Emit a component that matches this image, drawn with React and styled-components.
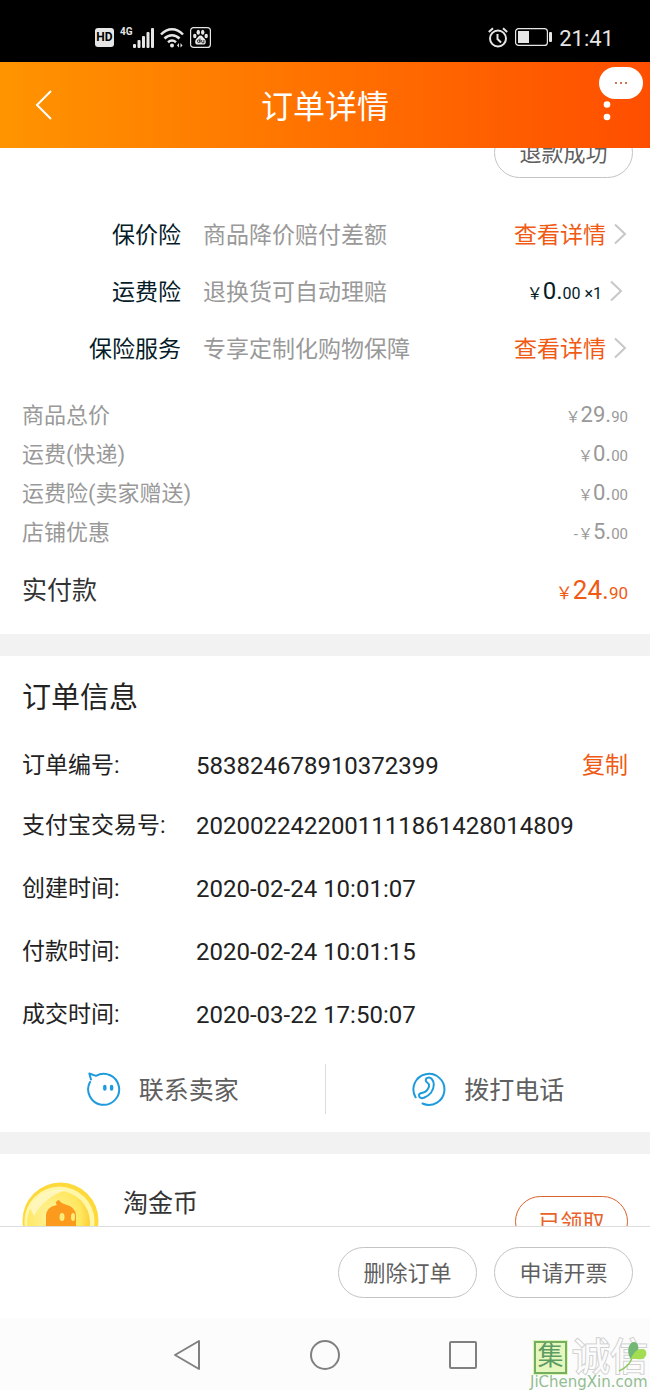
import styled, { createGlobalStyle } from "styled-components";

/* ---------- GLOBAL ---------- */

const GlobalStyle = createGlobalStyle`
  * {
    box-sizing: border-box;
  }

  body {
    margin: 0;
    background: #ffffff;
    font-family: Roboto, "Noto Sans CJK SC", sans-serif;
  }

  button {
    font-family: inherit;
    cursor: pointer;
  }

  svg {
    display: block;
    flex-shrink: 0;
  }
`;

const Page = styled.div`
  position: relative;
  height: 100vh;
  display: flex;
  flex-direction: column;
  overflow: hidden;
`;

/* ---------- STATUS BAR ---------- */

const StatusBar = styled.div`
  flex-shrink: 0;
  height: 62px;
  padding: 12px 36px 0 95px;
  display: flex;
  align-items: center;
  justify-content: space-between;
  background: #000000;
  color: #e6e6e6;
`;

const StatusGroup = styled.div`
  display: flex;
  align-items: center;
  gap: ${({ $gap }) => $gap}px;
`;

const HdBadge = styled.span`
  width: 19px;
  height: 19px;
  border-radius: 3px;
  background: #e6e6e6;
  color: #000000;
  font-size: 12px;
  line-height: 19px;
  font-weight: 700;
  text-align: center;
`;

const Signal = styled.div`
  display: flex;
  align-items: flex-start;
`;

const Network = styled.span`
  font-size: 10px;
  line-height: 10px;
  font-weight: 700;
`;

const Clock = styled.time`
  padding-top: 3px;
  font-size: 22px;
  line-height: 26px;
`;

/* ---------- HEADER ---------- */

const Header = styled.header`
  flex-shrink: 0;
  height: 86px;
  padding: 0 23px;
  display: grid;
  grid-template-columns: 40px 1fr 40px;
  align-items: center;
  background: linear-gradient(90deg, #ff9400, #ff4e00);
  color: #ffffff;
`;

const IconButton = styled.button`
  height: 44px;
  padding: 0;
  border: none;
  background: none;
  color: inherit;
  display: flex;
  align-items: center;
  justify-content: center;
`;

const Title = styled.h1`
  margin: 0;
  padding-top: 4px;
  font-size: 32px;
  line-height: 40px;
  font-weight: 400;
  text-align: center;
`;

const Bubble = styled.span`
  position: absolute;
  top: 67px;
  right: 7px;
  width: 44px;
  height: 32px;
  border-radius: 16px;
  background: #ffffff;
  display: flex;
  align-items: center;
  justify-content: center;
  gap: 3px;
`;

const BubbleDot = styled.i`
  width: 2px;
  height: 2px;
  background: #c8775a;
`;

/* ---------- CONTENT ---------- */

const Main = styled.main`
  flex: 1;
  min-height: 0;
  overflow: hidden;
`;

const Pill = styled.button`
  width: ${({ $accent }) => ($accent ? 113 : 139)}px;
  height: 51px;
  padding: 3px 0 0;
  border: 1px solid ${({ $accent }) => ($accent ? "#d9632c" : "#c4c4c4")};
  border-radius: 26px;
  background: #ffffff;
  color: ${({ $accent }) => ($accent ? "#e8622a" : "#5f5f5f")};
  font-size: 22px;
  line-height: 32px;
`;

/* scrolled part way under the header */
const RefundRow = styled.div`
  margin-top: -21px;
  padding: 0 17px 29px;
  display: flex;
  justify-content: flex-end;
`;

const InsuranceList = styled.ul`
  margin: 0;
  padding: 0;
  list-style: none;
`;

const InsuranceRow = styled.li`
  height: 57px;
  padding-right: ${({ $priced }) => ($priced ? 27 : 23)}px;
  display: grid;
  grid-template-columns: 181px 1fr auto;
  column-gap: 22px;
  align-items: center;
  font-size: 23px;
  line-height: 32px;
`;

const InsuranceName = styled.span`
  color: #051b28;
  text-align: right;
`;

const InsuranceText = styled.span`
  color: #999999;
`;

const DetailLink = styled.a`
  display: flex;
  align-items: center;
  gap: 7px;
  color: ${({ $priced }) => ($priced ? "#051b28" : "#f05a14")};
  text-decoration: none;

  svg {
    margin-bottom: 4px;
  }
`;

const Amount = styled.span`
  color: ${({ $color }) => $color || "inherit"};
  font-size: ${({ $size }) => $size || 22}px;
  line-height: 32px;
  white-space: nowrap;

  small {
    font-size: ${({ $small }) => $small || 15}px;
  }
`;

const Fees = styled.dl`
  margin: 0;
  padding: 18px 22px 4px;

  dt,
  dd {
    margin: 0;
  }
`;

const FeeRow = styled.div`
  height: ${({ $total }) => ($total ? 78 : 39)}px;
  display: flex;
  align-items: center;
  justify-content: space-between;
  color: ${({ $total }) => ($total ? "#333333" : "#999999")};
  font-size: ${({ $total }) => ($total ? 25 : 22)}px;
  line-height: 32px;
`;

const Band = styled.div`
  height: 22px;
  background: #f2f2f2;
`;

const Info = styled.section`
  padding: 22px 22px 0;
`;

const SectionTitle = styled.h2`
  margin: 0 0 20px;
  color: #222222;
  font-size: 29px;
  line-height: 40px;
  font-weight: 400;
`;

const InfoList = styled.dl`
  margin: 0;

  dt,
  dd {
    margin: 0;
  }
`;

const InfoRow = styled.div`
  height: ${({ $first }) => ($first ? 56 : 63)}px;
  display: grid;
  grid-template-columns: 174px 1fr auto;
  align-items: center;
  color: #222222;
  font-size: 24px;
  line-height: 32px;

  dt {
    font-size: 23px;
  }
`;

const CopyButton = styled.button`
  padding: 0;
  border: none;
  background: none;
  color: #f05a14;
  font-size: 23px;
  line-height: 32px;
`;

const Contacts = styled.div`
  height: 86px;
  display: grid;
  grid-template-columns: 1fr 1px 1fr;
  align-items: center;
`;

const ContactButton = styled.button`
  padding: 0;
  border: none;
  background: none;
  display: flex;
  align-items: center;
  justify-content: center;
  gap: 17px;
  color: #5f5f5f;
  font-size: 25px;
  line-height: 36px;
`;

const ContactLabel = styled.span`
  padding-top: 4px;
`;

const Divider = styled.span`
  height: 50px;
  background: #dddddd;
`;

const CoinRow = styled.section`
  padding: 28px 22px 0;
  display: flex;
  align-items: flex-start;
`;

const CoinName = styled.h3`
  flex: 1;
  margin: 4px 0 0 24px;
  color: #333333;
  font-size: 25px;
  line-height: 36px;
  font-weight: 400;
`;

const CoinAction = styled.div`
  padding-top: 14px;
`;

/* ---------- BOTTOM ---------- */

const ActionBar = styled.footer`
  flex-shrink: 0;
  height: 92px;
  padding: 0 17px;
  border-top: 1px solid #dddddd;
  display: flex;
  align-items: center;
  justify-content: flex-end;
  gap: 17px;
  background: #ffffff;
`;

const NavBar = styled.nav`
  flex-shrink: 0;
  height: 72px;
  padding: 2px 118px 0;
  display: grid;
  grid-template-columns: repeat(3, 1fr);
  align-items: center;
  background: #fcfcfc;
  color: #808080;
`;

const Watermark = styled.div`
  position: absolute;
  right: 0;
  bottom: 0;
  width: 120px;
`;

const MarkTop = styled.div`
  padding-left: 4px;
  display: flex;
  align-items: center;
  gap: 5px;
`;

const MarkSeal = styled.span`
  width: 33px;
  height: 33px;
  border: 2px solid #74ae62;
  outline: 1px solid #dff5b4;
  background: #e5f7bd;
  color: #5d9c63;
  font-size: 26px;
  line-height: 27px;
  text-align: center;
`;

const MarkName = styled.span`
  color: #fcfcfc;
  font-size: 38px;
  line-height: 34px;
  -webkit-text-stroke: 2px #d0d0d0;
  paint-order: stroke fill;
`;

const MarkSite = styled.div`
  color: #93bd93;
  font-family: "DejaVu Sans", sans-serif;
  font-size: 15px;
  line-height: 16px;
`;

const Leaf = styled.svg`
  position: absolute;
  right: 2px;
  top: 1px;
`;

/* ---------- DATA ---------- */

const insurances = [
  { name: "保价险", text: "商品降价赔付差额" },
  { name: "运费险", text: "退换货可自动理赔", price: ["0", "00"], count: 1 },
  { name: "保险服务", text: "专享定制化购物保障" },
];

const fees = [
  { name: "商品总价", price: ["29", "90"] },
  { name: "运费(快递)", price: ["0", "00"] },
  { name: "运费险(卖家赠送)", price: ["0", "00"] },
  { name: "店铺优惠", sign: "-", price: ["5", "00"] },
];

const details = [
  { name: "支付宝交易号:", value: "2020022422001111861428014809" },
  { name: "创建时间:", value: "2020-02-24 10:01:07" },
  { name: "付款时间:", value: "2020-02-24 10:01:15" },
  { name: "成交时间:", value: "2020-03-22 17:50:07" },
];

/* ---------- ICONS ---------- */

const Bars = () => (
  <svg width="21" height="21" viewBox="0 0 21 21" fill="currentColor">
    <rect x="0" y="17" width="3" height="4" rx="1" />
    <rect x="4.5" y="13" width="3" height="8" rx="1" />
    <rect x="9" y="9" width="3" height="12" rx="1" />
    <rect x="13.5" y="5" width="3" height="16" rx="1" />
    <rect x="18" y="1" width="3" height="20" rx="1" />
  </svg>
);

const Wifi = () => (
  <svg width="24" height="21" viewBox="0 0 24 21" fill="none" stroke="currentColor" strokeWidth="2.5">
    <path d="M1 7.5C7.5 0.5 16.5 0.5 23 7.5" />
    <path d="M4.5 11.5C9 7 15 7 19.5 11.5" />
    <path d="M8 15.2C10.5 13 13.5 13 16 15.2" />
    <circle cx="12" cy="18.5" r="2" fill="currentColor" stroke="none" />
    <path d="M19 16l-2 2.5 2 2zM20.5 16l2 2.5-2 2z" fill="currentColor" stroke="none" />
  </svg>
);

const Paw = () => (
  <svg width="21" height="21" viewBox="0 0 21 21">
    <rect x="0.6" y="0.6" width="19.8" height="19.8" rx="3" fill="none" stroke="currentColor" strokeWidth="1.2" />
    <g fill="currentColor">
      <ellipse cx="4.8" cy="9" rx="1.7" ry="2.3" />
      <ellipse cx="8.3" cy="5.2" rx="1.7" ry="2.5" />
      <ellipse cx="12.7" cy="5.2" rx="1.7" ry="2.5" />
      <ellipse cx="16.2" cy="9" rx="1.7" ry="2.3" />
      <path d="M10.5 8.5c2 0 2.6 2 4 3.3 2 1.8 2 5.8-1.3 5.8h-5.4c-3.3 0-3.3-4-1.3-5.8 1.4-1.3 2-3.3 4-3.3z" />
    </g>
    <circle cx="8.7" cy="14.2" r="1.3" fill="none" stroke="#000" strokeWidth="0.8" />
    <path d="M10 11.5v4.2M11.7 13v1.8q0 1 1 1h1.2V13" fill="none" stroke="#000" strokeWidth="0.8" />
  </svg>
);

const Alarm = () => (
  <svg width="20" height="21" viewBox="0 0 20 21" fill="none" stroke="currentColor" strokeWidth="2">
    <circle cx="10" cy="11.5" r="8" />
    <path d="M9.5 7v5l3.5 3.5M0.8 5L5 1.2M19.2 5L15 1.2" />
  </svg>
);

const Battery = () => (
  <svg width="37" height="18" viewBox="0 0 37 18">
    <rect x="0.6" y="0.6" width="31.8" height="16.8" rx="3" fill="none" stroke="currentColor" strokeWidth="1.2" />
    <rect x="3" y="3" width="11" height="12" fill="currentColor" />
    <rect x="34" y="4" width="3" height="10" rx="1" fill="currentColor" />
  </svg>
);

const Back = () => (
  <svg width="28" height="32" viewBox="0 0 28 32" fill="none" stroke="currentColor" strokeWidth="2">
    <path d="M22 2L8 16L22 30" />
  </svg>
);

const More = () => (
  <svg width="8" height="32" viewBox="0 0 8 32" fill="currentColor">
    <circle cx="4" cy="3" r="3.3" />
    <circle cx="4" cy="15.5" r="3.3" />
    <circle cx="4" cy="28" r="3.3" />
  </svg>
);

const Chevron = () => (
  <svg width="14" height="22" viewBox="0 0 14 22" fill="none" stroke="#c7c7c7" strokeWidth="2">
    <path d="M2 1.5L12 11L2 20.5" />
  </svg>
);

const Chat = () => (
  <svg width="36" height="36" viewBox="0 0 36 36" fill="none" stroke="#1e9bdc" strokeWidth="2" strokeLinecap="round" strokeLinejoin="round">
    <path d="M4 11A15.5 15.5 0 1 0 10 4.85L3.3 2.5L5 8.5" />
    <path d="M18.8 15.5v2.5M25.6 15.5v2.5" strokeWidth="3.4" />
  </svg>
);

const Phone = () => (
  <svg width="36" height="36" viewBox="0 0 36 36" fill="none" stroke="#1e9bdc" strokeWidth="2" strokeLinecap="round" strokeLinejoin="round">
    <path d="M4.6 26.3A15.5 15.5 0 1 1 11.5 32.5" />
    <path d="M16.5 6.8C19.5 5.5 22.8 9 22.8 13.5C22.8 19.5 18.5 24.5 13 26.7C10 28 7.7 26.3 8 23.8C8.3 21.3 11.2 22.4 13.5 21.2C16.5 19.7 18.5 16 18 13.6C17.5 11.6 14.8 11.6 14.7 9.2C14.7 8 15.5 7.2 16.5 6.8z" />
  </svg>
);

const Coin = () => (
  <svg width="77" height="77" viewBox="0 0 77 77">
    <defs>
      <radialGradient id="coin" cx="0.4" cy="0.4" r="0.65">
        <stop offset="0" stopColor="#fff3a0" />
        <stop offset="0.7" stopColor="#ffe75e" />
        <stop offset="1" stopColor="#fbc92e" />
      </radialGradient>
    </defs>
    <circle cx="38.5" cy="38.5" r="38" fill="#fdd93a" />
    <circle cx="37.5" cy="39.5" r="35" fill="#fff6a8" />
    <circle cx="36.5" cy="40.5" r="31.5" fill="url(#coin)" />
    <path d="M8 26C15 12 29 6 44 8C31 12 19 21 12 34z" fill="#fffbd8" opacity="0.7" />
    <path d="M24 46V33C25 26 30 24 35 23C33 21 34 19 37 18C38 20 41 22 45 23C51 25 54 29 54 34V54H24z" fill="#fb9a1c" />
    <ellipse cx="40" cy="35" rx="2.5" ry="4" fill="#ffec7a" />
    <ellipse cx="51" cy="35" rx="2" ry="4" fill="#ffec7a" />
  </svg>
);

/* ---------- COMPONENT ---------- */

const Price = ({ price, sign, ...rest }) => (
  <Amount {...rest}>
    <small>{sign}￥</small>
    {price[0]}.<small>{price[1]}</small>
  </Amount>
);

export default function App() {
  return (
    <Page>
      <GlobalStyle />

      <StatusBar>
        <StatusGroup $gap={6}>
          <HdBadge>HD</HdBadge>
          <Signal>
            <Network>4G</Network>
            <Bars />
          </Signal>
          <Wifi />
          <Paw />
        </StatusGroup>
        <StatusGroup $gap={7}>
          <Alarm />
          <Battery />
          <Clock>21:41</Clock>
        </StatusGroup>
      </StatusBar>

      <Header>
        <IconButton aria-label="返回">
          <Back />
        </IconButton>
        <Title>订单详情</Title>
        <IconButton aria-label="更多">
          <More />
        </IconButton>
        <Bubble>
          <BubbleDot />
          <BubbleDot />
          <BubbleDot />
        </Bubble>
      </Header>

      <Main>
        <RefundRow>
          <Pill>退款成功</Pill>
        </RefundRow>

        <InsuranceList>
          {insurances.map(({ name, text, price, count }) => (
            <InsuranceRow key={name} $priced={!!price}>
              <InsuranceName>{name}</InsuranceName>
              <InsuranceText>{text}</InsuranceText>
              <DetailLink href="#" $priced={!!price}>
                {price ? (
                  <span>
                    <Price price={price} $size={24} $small={16} />
                    <Amount $size={16}> ×{count}</Amount>
                  </span>
                ) : (
                  "查看详情"
                )}
                <Chevron />
              </DetailLink>
            </InsuranceRow>
          ))}
        </InsuranceList>

        <Fees>
          {fees.map(({ name, price, sign }) => (
            <FeeRow key={name}>
              <dt>{name}</dt>
              <dd>
                <Price price={price} sign={sign} />
              </dd>
            </FeeRow>
          ))}
          <FeeRow $total>
            <dt>实付款</dt>
            <dd>
              <Price price={["24", "90"]} $color="#f05a14" $size={26} $small={17} />
            </dd>
          </FeeRow>
        </Fees>

        <Band />

        <Info>
          <SectionTitle>订单信息</SectionTitle>
          <InfoList>
            <InfoRow $first>
              <dt>订单编号:</dt>
              <dd>583824678910372399</dd>
              <CopyButton>复制</CopyButton>
            </InfoRow>
            {details.map(({ name, value }) => (
              <InfoRow key={name}>
                <dt>{name}</dt>
                <dd>{value}</dd>
              </InfoRow>
            ))}
          </InfoList>
        </Info>

        <Contacts>
          <ContactButton>
            <Chat />
            <ContactLabel>联系卖家</ContactLabel>
          </ContactButton>
          <Divider />
          <ContactButton>
            <Phone />
            <ContactLabel>拨打电话</ContactLabel>
          </ContactButton>
        </Contacts>

        <Band />

        <CoinRow>
          <Coin />
          <CoinName>淘金币</CoinName>
          <CoinAction>
            <Pill $accent>已领取</Pill>
          </CoinAction>
        </CoinRow>
      </Main>

      <ActionBar>
        <Pill>删除订单</Pill>
        <Pill>申请开票</Pill>
      </ActionBar>

      <NavBar>
        <IconButton aria-label="后退">
          <svg width="30" height="32" viewBox="0 0 30 32" fill="none" stroke="currentColor" strokeWidth="2" strokeLinejoin="round">
            <path d="M27 2V30L3 16z" />
          </svg>
        </IconButton>
        <IconButton aria-label="主页">
          <svg width="32" height="32" viewBox="0 0 32 32" fill="none" stroke="currentColor" strokeWidth="2">
            <circle cx="16" cy="16" r="14" />
          </svg>
        </IconButton>
        <IconButton aria-label="最近任务">
          <svg width="28" height="28" viewBox="0 0 28 28" fill="none" stroke="currentColor" strokeWidth="2">
            <rect x="1" y="1" width="26" height="26" rx="1" />
          </svg>
        </IconButton>
      </NavBar>

      <Watermark>
        <MarkTop>
          <MarkSeal>集</MarkSeal>
          <MarkName>诚信</MarkName>
        </MarkTop>
        <MarkSite>JiChengXin.com</MarkSite>
        <Leaf width="30" height="32" viewBox="0 0 30 32">
          <path d="M1 30C8 27 12 23 14 17" fill="none" stroke="#8bcb5c" strokeWidth="1.5" />
          <path d="M13 18C9 14 9 3 15 1C20 0 21 6 20 9C18 12 15 14 13 18z" fill="#72b775" />
          <path d="M13 18C15 12 19 8 24 8C29 8 30 14 26 17C22 20 17 17 13 18z" fill="#a2dd52" />
        </Leaf>
      </Watermark>
    </Page>
  );
}
